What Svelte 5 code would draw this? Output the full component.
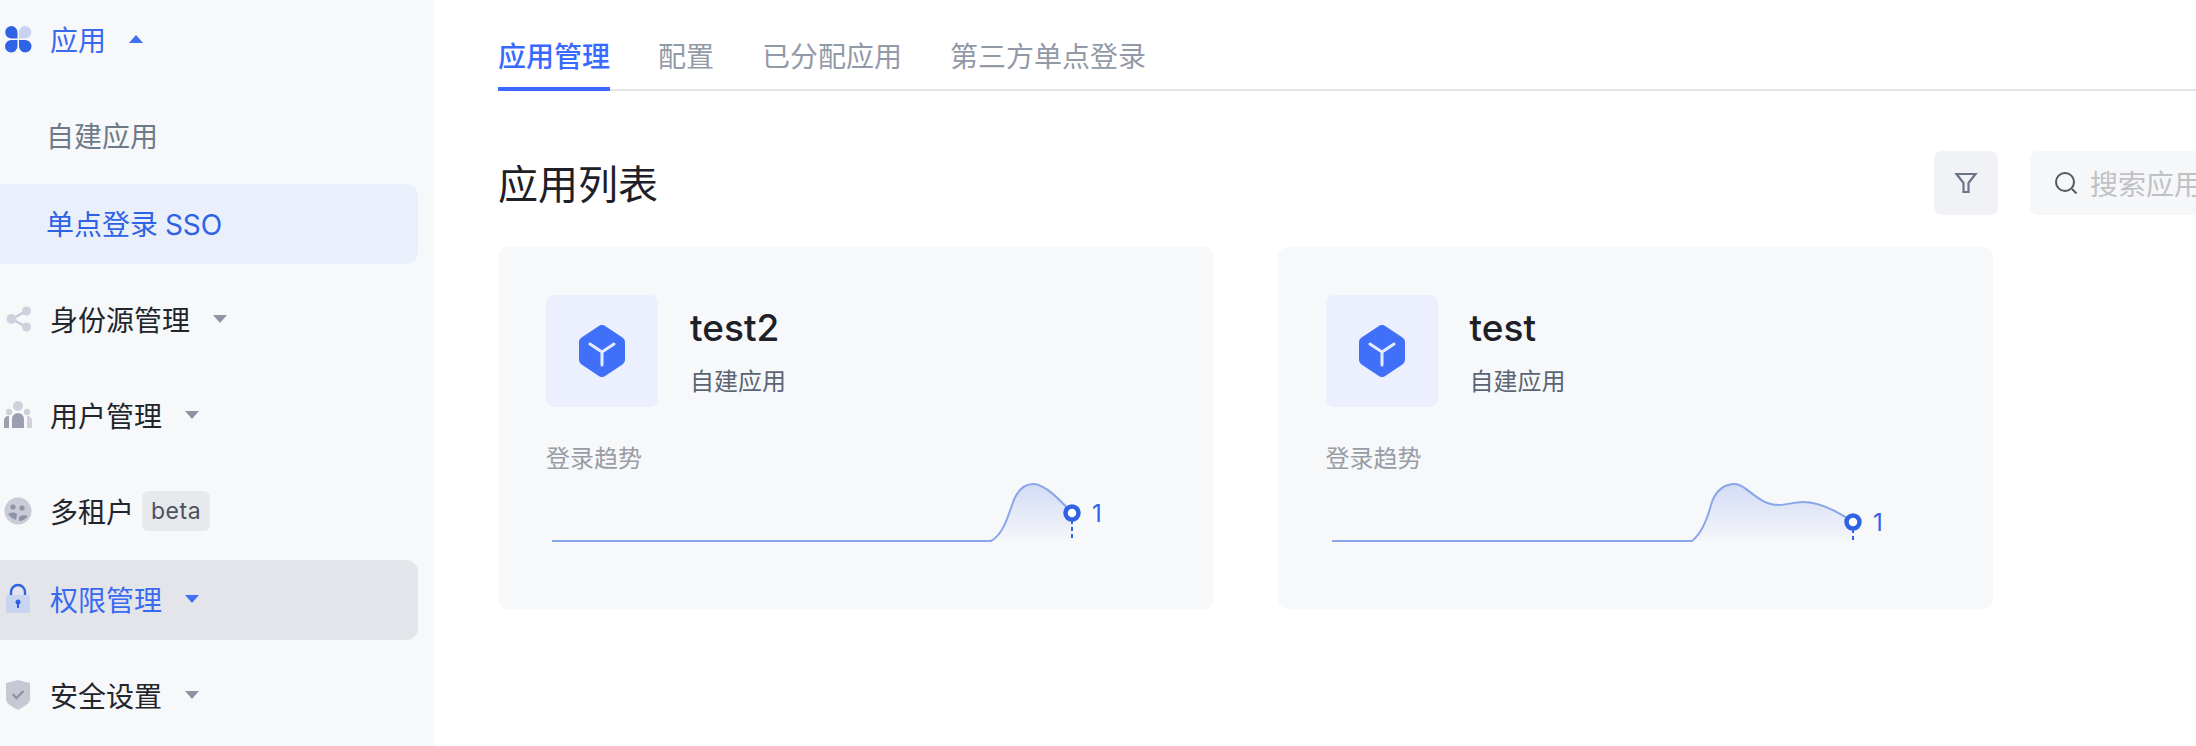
<script>
	const menu = [
		{ label: '应用', icon: 'apps', arrow: 'up', tone: 'blue' },
		{ label: '自建应用', sub: true, tone: 'muted' },
		{ label: '单点登录 SSO', sub: true, tight: true, tone: 'link', bg: 'selected' },
		{ label: '身份源管理', icon: 'share', arrow: 'down' },
		{ label: '用户管理', icon: 'users', arrow: 'down' },
		{ label: '多租户', icon: 'tenant', beta: true },
		{ label: '权限管理', icon: 'lock', arrow: 'down', tight: true, tone: 'blue', bg: 'hover' },
		{ label: '安全设置', icon: 'shield', arrow: 'down' }
	];

	const tabs = ['应用管理', '配置', '已分配应用', '第三方单点登录'];

	const apps = [
		{
			name: 'test2',
			line: 'M6 66H445C456 60 461 45 466 30C471 15 479 9 487 9C499 9 514 25 526 38',
			end: { x: 526, y: 38 }
		},
		{
			name: 'test',
			line: 'M6 66H366C376 58 381 45 385 30C389 15 399 9 409 9C421 9 431 30 453 30C461 30 467 27 477 27C494 27 511 36 527 47',
			end: { x: 527, y: 47 }
		}
	];
</script>

{#snippet icon(name)}
	<svg class="menu-icon" width="32" height="32" viewBox="0 0 32 32">
		{#if name === 'apps'}
			<path d="M9.500 3a6.500 6.500 0 0 1 6 6.500v6h-6a6.250 6.250 0 0 1 0-12.500Z" fill="#2f62e4" />
			<path d="M23 3a6.250 6.250 0 0 1 0 12.500h-6v-6a6.500 6.500 0 0 1 6-6.500Z" fill="#c6d2ee" />
			<path d="M9.500 17h6v6a6.250 6.250 0 1 1-6-6Z" fill="#2f62e4" />
			<path d="M17 17h6a6.250 6.250 0 1 1-6 6Z" fill="#2f62e4" />
		{:else if name === 'share'}
			<path d="M24 8 10 16l14 8" fill="none" stroke="#c9ccd8" stroke-width="2.500" />
			<circle cx="9.500" cy="16" r="5" fill="#cfd2dc" />
			<circle cx="24.500" cy="8" r="4.500" fill="#cfd2dc" />
			<circle cx="24.500" cy="24" r="4.500" fill="#cfd2dc" />
		{:else if name === 'users'}
			<circle cx="16" cy="7" r="5" fill="#cfd2dc" />
			<circle cx="7" cy="13" r="3.200" fill="#cfd2dc" />
			<circle cx="25" cy="13" r="3.200" fill="#cfd2dc" />
			<path d="M10 29V20a6 6 0 0 1 12 0v9Z" fill="#9a9fb2" />
			<path d="M2 29v-7a4.500 4.500 0 0 1 5-5v12Z" fill="#9a9fb2" />
			<path d="M30 29v-7a4.500 4.500 0 0 0-5-5v12Z" fill="#cfd2dc" />
		{:else if name === 'tenant'}
			<circle cx="16" cy="16" r="13.500" fill="#c9ccd6" />
			<circle cx="11" cy="12" r="2.600" fill="#8e93a6" />
			<circle cx="20" cy="13" r="2.600" fill="#8e93a6" />
			<path d="M6 19c3-2 7-2 9 0l-1 6c-3-1-6-3-8-6Z" fill="#8e93a6" />
			<path d="M17 22c3-2 6-2 9-1-2 3-6 5-9 5Z" fill="#8e93a6" />
		{:else if name === 'lock'}
			<path d="M9 14V9a7 7 0 0 1 14 0v5" fill="none" stroke="#2f62e4" stroke-width="2.400" />
			<rect x="4" y="12" width="24" height="18" rx="1.500" fill="#c8d4f0" />
			<circle cx="16" cy="19" r="2.500" fill="#2f62e4" />
			<rect x="15" y="19" width="2" height="6" fill="#2f62e4" />
		{:else if name === 'shield'}
			<path d="M16 1 28 4v16c0 5-7 8-12 11C11 28 4 25 4 20V4Z" fill="#c6c9d4" />
			<path d="m10.500 15 4 4 7-7" fill="none" stroke="#8e93a6" stroke-width="2.400" />
		{/if}
	</svg>
{/snippet}

<div class="page">
	<aside class="sidebar">
		{#each menu as item}
			<div class="item {item.bg ?? ''} {item.tone ?? ''}" class:sub={item.sub} class:tight={item.tight}>
				{#if item.icon}{@render icon(item.icon)}{/if}
				<span class="label">{item.label}</span>
				{#if item.beta}<span class="beta">beta</span>{/if}
				{#if item.arrow}<span class="arrow {item.arrow}"></span>{/if}
			</div>
		{/each}
	</aside>

	<main class="main">
		<nav class="tabs">
			{#each tabs as tab, i}
				<span class="tab" class:active={i === 0}>{tab}</span>
			{/each}
		</nav>

		<div class="toolbar">
			<h1>应用列表</h1>
			<button class="filter" aria-label="筛选">
				<svg width="24" height="24" viewBox="0 0 24 24" fill="none" stroke="#6b7587" stroke-width="2.200">
					<path d="M2.500 3h19l-7 9v9h-5v-9Z" />
				</svg>
			</button>
			<div class="search">
				<svg width="24" height="24" viewBox="0 0 24 24" fill="none" stroke="#55585f" stroke-width="2">
					<circle cx="11" cy="11" r="9" />
					<path d="m18 18 4.500 4.500" />
				</svg>
				<span>搜索应用</span>
			</div>
		</div>

		<div class="cards">
			{#each apps as app, i}
				<section class="card">
					<div class="head">
						<div class="logo">
							<svg width="48" height="52" viewBox="0 0 48 52">
								<path d="M24 5 42 17V35L24 47 6 35V17Z" fill="#4070fa" stroke="#4070fa" stroke-width="10" stroke-linejoin="round" />
								<path d="M12 19 24 27 36 19M24 27V40" fill="none" stroke="#e6ecff" stroke-width="3" stroke-linecap="round" />
							</svg>
						</div>
						<div class="info">
							<div class="name">{app.name}</div>
							<div class="kind">自建应用</div>
						</div>
					</div>
					<div class="trend">登录趋势</div>
					<svg class="chart" width="600" height="80" viewBox="0 0 600 80">
						<defs>
							<linearGradient id="fade{i}" x1="0" y1="0" x2="0" y2="1">
								<stop offset="0" stop-color="#d3dcf5" />
								<stop offset="1" stop-color="#d3dcf5" stop-opacity="0.05" />
							</linearGradient>
						</defs>
						<path d="{app.line}V66Z" fill="url(#fade{i})" />
						<path d={app.line} fill="none" stroke="#8aa6ea" stroke-width="2" />
						<path d="M{app.end.x} {app.end.y}V66" stroke="#2f62e4" stroke-width="2" stroke-dasharray="4 3" />
						<circle cx={app.end.x} cy={app.end.y} r="6.500" fill="#fff" stroke="#2f62e4" stroke-width="4.500" />
						<text x={app.end.x + 20} y={app.end.y + 9} class="value">1</text>
					</svg>
				</section>
			{/each}
		</div>
	</main>
</div>

<style>
	:global(body) { background: #fff; }

	.page {
		display: flex; width: 2196px; height: 746px; overflow: hidden;
		font-family: Inter, "Noto Sans CJK SC", sans-serif; color: #22252b;
	}

	.sidebar { flex: 0 0 434px; background: #f7f8fa; padding-right: 16px; box-sizing: border-box; }
	.item {
		display: flex; align-items: center; height: 80px; margin-top: 16px;
		padding-left: 2px; padding-bottom: 2px; border-radius: 0 12px 12px 0; font-size: 28px; box-sizing: border-box;
	}
	.item:first-child { margin-top: 0; }
	.item.tight { margin-top: 8px; }
	.item.sub { padding-left: 46px; word-spacing: -1px; }
	.item.selected { background: #e9effb; }
	.item.hover { background: #e4e5ea; }
	.item.blue { color: #396aef; }
	.item.link { color: #2f62e4; }
	.item.muted { color: #6f7a88; }

	.menu-icon { flex: none; }
	.label { margin-left: 16px; }
	.sub .label { margin-left: 0; }

	.arrow { width: 0; height: 0; margin-left: 23px; border-left: 7px solid transparent; border-right: 7px solid transparent; }
	.arrow.down { border-top: 8px solid #9094a6; }
	.arrow.up { border-bottom: 8px solid #3f6ff5; }
	.blue .arrow.down { border-top-color: #3f6ff5; }

	.beta { margin-left: 8px; padding: 0 9px; height: 40px; line-height: 40px; font-size: 23px; letter-spacing: 0.5px; color: #4c5060; background: #e8e9ed; border-radius: 6px; }

	.main { flex: 1; min-width: 0; padding-left: 64px; overflow: hidden; }

	.tabs { display: flex; gap: 48px; height: 91px; padding-top: 37px; box-sizing: border-box; border-bottom: 2px solid #e2e3e8; }
	.tab { height: 54px; line-height: 40px; font-size: 28px; color: #929aa8; box-sizing: border-box; }
	.tab.active { color: #396aff; font-weight: 500; border-bottom: 4px solid #396aff; }

	.toolbar { display: flex; align-items: center; margin-top: 60px; height: 64px; }
	h1 { flex: 0 0 1436px; margin: 0 0 2px; font-size: 40px; font-weight: 400; color: #1d2027; }

	.filter { flex: none; display: flex; align-items: center; justify-content: center; width: 64px; height: 64px; padding: 0; border: 0; border-radius: 8px; background: #f1f2f5; }
	.search { flex: 0 0 320px; display: flex; align-items: center; gap: 12px; height: 64px; margin-left: 32px; padding-left: 24px; border-radius: 8px; background: #f6f7f9; font-size: 28px; color: #c0c1c4; box-sizing: border-box; }

	.cards { display: flex; gap: 64px; margin-top: 32px; }
	.card { flex: 0 0 715.5px; height: 362px; box-sizing: border-box; padding: 48px; background: #f7f8fa; border-radius: 10px; }

	.head { display: flex; gap: 32px; }
	.logo { display: flex; align-items: center; justify-content: center; width: 112px; height: 112px; border-radius: 8px; background: #ebeffe; }
	.name { margin-top: 11px; height: 44px; line-height: 44px; font-size: 37px; font-weight: 500; color: #1d2027; }
	.kind { margin-top: 16px; font-size: 24px; line-height: 32px; color: #5b6474; }

	.trend { margin-top: 36px; font-size: 24px; line-height: 32px; color: #989da6; }
	.chart { display: block; margin-top: 0; }
	.value { font-size: 24px; fill: #2f62e4; }
</style>
